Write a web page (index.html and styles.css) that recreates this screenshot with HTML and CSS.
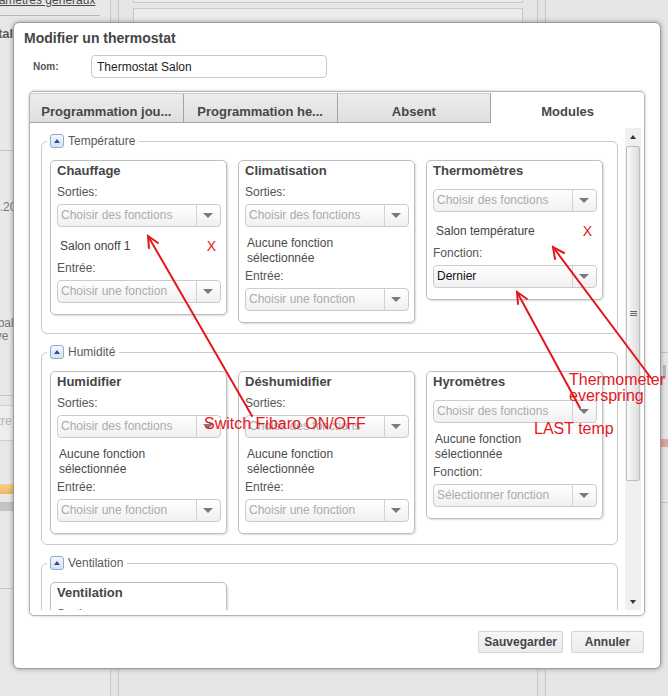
FILE: index.html
```html
<!DOCTYPE html>
<html lang="fr">
<head>
    <meta charset="UTF-8">
    <meta name="viewport" content="width=device-width, initial-scale=1.0">
    <title>Modifier un thermostat</title>
    <link rel="stylesheet" href="styles.css">
</head>
<body>
    <!-- page behind the modal -->
    <div class="page">
        <div class="side">
            <a class="side-link" href="#">Paramètres généraux</a>
            <div class="side-total">Total</div>
            <div class="side-info">
                <div class="side-date">1.2014</div>
                <div class="side-desc">Global<br>de ve</div>
            </div>
            <div class="side-field"><span>Filtre</span></div>
            <div class="side-bar"></div>
            <div class="side-rest"></div>
        </div>
        <div class="gutter"></div>
        <div class="main">
            <div class="main-box"></div>
            <div class="main-box second"></div>
        </div>
        <div class="gutter"></div>
        <div class="aside">
            <div class="aside-top"></div>
            <div class="aside-field"></div>
            <div class="aside-bar"></div>
            <div class="aside-rest"></div>
        </div>
    </div>

    <div class="dialog">
        <h1 class="dialog-title">Modifier un thermostat</h1>
        <div class="name-row">
            <label class="name-label" for="nom">Nom:</label>
            <input class="name-input" id="nom" type="text" value="Thermostat Salon">
        </div>

        <div class="tabs">
            <div class="tab-bar">
                <div class="tab">Programmation jou...</div>
                <div class="tab">Programmation he...</div>
                <div class="tab">Absent</div>
                <div class="tab active">Modules</div>
            </div>
            <div class="tab-body">
                <div class="scroll-view">
                    <fieldset class="group">
                        <legend><span class="toggle"></span>Température</legend>
                        <div class="cards">
                            <div class="card">
                                <div class="card-title">Chauffage</div>
                                <div class="field-label">Sorties:</div>
                                <div class="combo"><span class="combo-text">Choisir des fonctions</span><span class="combo-btn"></span></div>
                                <div class="item"><span>Salon onoff 1</span><span class="remove">X</span></div>
                                <div class="field-label">Entrée:</div>
                                <div class="combo"><span class="combo-text">Choisir une fonction</span><span class="combo-btn"></span></div>
                            </div>
                            <div class="card">
                                <div class="card-title">Climatisation</div>
                                <div class="field-label">Sorties:</div>
                                <div class="combo"><span class="combo-text">Choisir des fonctions</span><span class="combo-btn"></span></div>
                                <div class="empty">Aucune fonction<br>sélectionnée</div>
                                <div class="field-label">Entrée:</div>
                                <div class="combo"><span class="combo-text">Choisir une fonction</span><span class="combo-btn"></span></div>
                            </div>
                            <div class="card">
                                <div class="card-title">Thermomètres</div>
                                <div class="combo"><span class="combo-text">Choisir des fonctions</span><span class="combo-btn"></span></div>
                                <div class="item"><span>Salon température</span><span class="remove">X</span></div>
                                <div class="field-label">Fonction:</div>
                                <div class="combo"><span class="combo-text value">Dernier</span><span class="combo-btn"></span></div>
                            </div>
                        </div>
                    </fieldset>

                    <fieldset class="group">
                        <legend><span class="toggle"></span>Humidité</legend>
                        <div class="cards">
                            <div class="card">
                                <div class="card-title">Humidifier</div>
                                <div class="field-label">Sorties:</div>
                                <div class="combo"><span class="combo-text">Choisir des fonctions</span><span class="combo-btn"></span></div>
                                <div class="empty">Aucune fonction<br>sélectionnée</div>
                                <div class="field-label">Entrée:</div>
                                <div class="combo"><span class="combo-text">Choisir une fonction</span><span class="combo-btn"></span></div>
                            </div>
                            <div class="card">
                                <div class="card-title">Déshumidifier</div>
                                <div class="field-label">Sorties:</div>
                                <div class="combo"><span class="combo-text">Choisir des fonctions</span><span class="combo-btn"></span></div>
                                <div class="empty">Aucune fonction<br>sélectionnée</div>
                                <div class="field-label">Entrée:</div>
                                <div class="combo"><span class="combo-text">Choisir une fonction</span><span class="combo-btn"></span></div>
                            </div>
                            <div class="card">
                                <div class="card-title">Hyromètres</div>
                                <div class="combo"><span class="combo-text">Choisir des fonctions</span><span class="combo-btn"></span></div>
                                <div class="empty">Aucune fonction<br>sélectionnée</div>
                                <div class="field-label">Fonction:</div>
                                <div class="combo"><span class="combo-text">Sélectionner fonction</span><span class="combo-btn"></span></div>
                            </div>
                        </div>
                    </fieldset>

                    <fieldset class="group">
                        <legend><span class="toggle"></span>Ventilation</legend>
                        <div class="cards">
                            <div class="card">
                                <div class="card-title">Ventilation</div>
                                <div class="field-label">Sorties:</div>
                                <div class="combo"><span class="combo-text">Choisir des fonctions</span><span class="combo-btn"></span></div>
                            </div>
                        </div>
                    </fieldset>
                </div>
                <div class="scrollbar">
                    <div class="sb-up"></div>
                    <div class="sb-thumb"><span class="grip"></span></div>
                    <div class="sb-track"></div>
                    <div class="sb-down"></div>
                </div>
            </div>
        </div>

        <div class="dialog-buttons">
            <button class="btn" type="button">Sauvegarder</button>
            <button class="btn" type="button">Annuler</button>
        </div>
    </div>

    <!-- red hand-drawn notes on top of the screenshot -->
    <svg class="notes" width="668" height="696" viewBox="0 0 668 696">
        <g stroke="#e3171c" stroke-width="2" fill="none" stroke-linecap="round">
            <line x1="148" y1="236" x2="252" y2="416"/>
            <polyline points="149,248 148,236 158,243"/>
            <line x1="517" y1="292" x2="580" y2="408"/>
            <polyline points="518,304 517,292 527,299"/>
            <line x1="553" y1="247" x2="651" y2="378"/>
            <polyline points="555,259 553,247 564,253"/>
        </g>
        <g class="note-text">
            <text x="204" y="429">Switch Fibaro ON/OFF</text>
            <text x="569" y="385">Thermometer</text>
            <text x="569" y="401">everspring</text>
            <text x="534" y="434">LAST temp</text>
        </g>
    </svg>
</body>
</html>
```

FILE: styles.css
```css
body {
    margin: 0;
    background-color: #e2e2e2;
    font-family: "Liberation Sans", Arial, sans-serif;
    font-size: 12px;
    color: #555;
}

/* ---------- page behind the dialog ---------- */
.page {
    display: flex;
    height: 696px;
    overflow: hidden;
}
.side {
    width: 110px;
    flex: none;
    border-right: 1px solid #c6c6c6;
    background: #e8e8e8;
    overflow: hidden;
    white-space: nowrap;
}
.side-link {
    display: block;
    height: 21px;
    margin: -6px 10px 0 -20px;
    line-height: 12px;
    color: #4a4a4a;
    border-bottom: 1px solid #b8b8b8;
}
.side-total {
    height: 135px;
    padding-top: 10px;
    box-sizing: border-box;
    text-indent: -17px;
    font-size: 13px;
    font-weight: bold;
    color: #5a5a5a;
    border-bottom: 1px solid #c4c4c4;
}
.side-info {
    height: 195px;
    border-bottom: 1px solid #c4c4c4;
    color: #777;
}
.side-date {
    margin-top: 49px;
    text-indent: -7px;
}
.side-desc {
    margin: 103px 0 0 -21px;
    line-height: 13px;
}
.side-field {
    height: 34px;
    margin-top: 9px;
    border-top: 1px solid #cfcfcf;
    border-bottom: 1px solid #cfcfcf;
    background: #eeeeee;
    color: #b4b4b4;
    line-height: 30px;
}
.side-field span {
    margin-left: -15px;
}
.side-bar {
    height: 10px;
    margin-top: 43px;
    background: linear-gradient(#f7d08e, #eeb760);
    border-bottom: 8px solid #e8e8e8;
    box-shadow: 0 9px 0 #c4c4c4;
}
.side-rest {
    height: 86px;
    border-bottom: 1px solid #c4c4c4;
}
.gutter {
    width: 7px;
    flex: none;
    border-right: 1px solid #c6c6c6;
    background: #e4e4e4;
}
.main {
    width: 419px;
    flex: none;
    padding: 0 14px;
    box-sizing: border-box;
    border-right: 1px solid #c6c6c6;
    background: #e6e6e6;
}
.main-box {
    height: 2px;
    border: 1px solid #cacaca;
    border-top: none;
    background: #ececec;
}
.main-box.second {
    height: 30px;
    margin-top: 5px;
    border-top: 1px solid #cacaca;
}
.aside {
    flex: 1;
    background: #e6e6e6;
}
.aside-top {
    height: 352px;
    border-bottom: 1px solid #c4c4c4;
}
.aside-field {
    height: 14px;
    margin-top: 12px;
    border-left: 3px solid #b8b8b8;
    margin-left: 117px;
}
.aside-bar {
    height: 8px;
    margin-top: 60px;
    background: #e2a4a0;
}
.aside-rest {
    height: 55px;
    border-bottom: 1px solid #c4c4c4;
    box-shadow: 0 9px 0 -8px #c4c4c4;
}

/* ---------- dialog ---------- */
.dialog {
    position: absolute;
    left: 13px;
    top: 22px;
    width: 648px;
    box-sizing: border-box;
    padding: 0 15px 15px;
    background: #fff;
    border: 1px solid #9c9c9c;
    border-radius: 6px;
    box-shadow: 0 0 5px rgba(0, 0, 0, 0.35);
}
.dialog-title {
    margin: 0 0 0 -5px;
    padding-top: 5px;
    font-size: 14px;
    line-height: 20px;
    color: #454545;
}
.name-row {
    display: flex;
    align-items: center;
    margin-top: 7px;
    padding-left: 4px;
}
.name-label {
    width: 58px;
    font-size: 10px;
    font-weight: bold;
    color: #555;
}
.name-input {
    width: 236px;
    height: 23px;
    box-sizing: border-box;
    margin: 0;
    padding: 0 5px;
    border: 1px solid #c8c8c8;
    border-radius: 4px;
    font-family: inherit;
    font-size: 12px;
    color: #222;
    outline: none;
}

.tabs {
    margin-top: 13px;
    border: 1px solid #b3b3b3;
    border-radius: 5px;
    box-shadow: 0 0 3px rgba(0, 0, 0, 0.25);
    overflow: hidden;
}
.tab-bar {
    display: flex;
    padding-top: 1px;
}
.tab {
    flex: 1;
    height: 30px;
    box-sizing: border-box;
    padding-top: 9px;
    line-height: 18px;
    text-align: center;
    font-size: 13px;
    font-weight: bold;
    color: #474747;
    background: linear-gradient(#ececec, #dfdfdf);
    border-top: 1px solid #cfcfcf;
    border-right: 1px solid #a4a4a4;
    border-bottom: 1px solid #a4a4a4;
}
.tab:first-child {
    border-top-left-radius: 4px;
}
.tab.active {
    background: #fff;
    border-top-color: #fff;
    border-right: none;
    border-bottom-color: #fff;
}
.tab-body {
    display: flex;
    height: 492px;
    box-sizing: border-box;
    padding: 5px 3px 5px 0;
}
.scroll-view {
    flex: 1;
    overflow: hidden;
    padding: 6px 7px 0 11px;
}

.group {
    margin: 0 0 11px;
    padding: 12px 14px 10px 8px;
    border: 1px solid #cacaca;
    border-radius: 6px;
    min-width: 0;
}
.group legend {
    display: flex;
    align-items: center;
    margin-left: -3px;
    padding: 0 4px 0 3px;
    line-height: 14px;
    color: #5a5a5a;
}
.toggle {
    position: relative;
    width: 14px;
    height: 14px;
    box-sizing: border-box;
    margin-right: 4px;
    border: 1px solid #92aacb;
    border-radius: 3px;
    background: linear-gradient(#f2f7fd, #d5e3f3);
}
.toggle::after {
    content: "";
    position: absolute;
    left: 3px;
    top: 4px;
    border-left: 3px solid transparent;
    border-right: 3px solid transparent;
    border-bottom: 4px solid #2b4f8f;
}

.cards {
    display: flex;
    align-items: flex-start;
    gap: 11px;
}
.card {
    width: 177px;
    box-sizing: border-box;
    padding: 0 5px 11px 6px;
    border: 1px solid #bebebe;
    border-radius: 5px;
    box-shadow: 1px 1px 2px rgba(0, 0, 0, 0.15);
}
.card-title {
    margin-bottom: 3px;
    font-size: 13px;
    font-weight: bold;
    line-height: 20px;
    color: #464646;
}
.field-label {
    line-height: 16px;
    color: #555;
}
.combo {
    display: flex;
    height: 23px;
    box-sizing: border-box;
    margin-top: 4px;
    border: 1px solid #cbcbcb;
    border-radius: 4px;
    background: linear-gradient(#ffffff, #f0f0f0);
}
.card-title + .combo {
    margin-top: 8px;
}
.combo-text {
    flex: 1;
    padding-left: 3px;
    line-height: 21px;
    color: #ababab;
    white-space: nowrap;
    overflow: hidden;
}
.combo-text.value {
    color: #111;
}
.combo-btn {
    position: relative;
    width: 23px;
    border-left: 1px solid #d2d2d2;
}
.combo-btn::after {
    content: "";
    position: absolute;
    left: 6px;
    top: 8px;
    border-left: 5px solid transparent;
    border-right: 5px solid transparent;
    border-top: 5px solid #7a7a7a;
}
.item {
    display: flex;
    justify-content: space-between;
    align-items: center;
    height: 28px;
    margin-top: 5px;
    padding: 0 5px 0 3px;
    color: #444;
}
.remove {
    font-size: 14px;
    color: #e31414;
}
.empty {
    margin-top: 9px;
    padding: 0 2px 2px;
    line-height: 15px;
    color: #4a4a4a;
}

.scrollbar {
    display: flex;
    flex-direction: column;
    width: 16px;
    background: #efefef;
}
.sb-up, .sb-down {
    position: relative;
    height: 18px;
}
.sb-down {
    height: 16px;
}
.sb-up::after, .sb-down::after {
    content: "";
    position: absolute;
    left: 5px;
    border-left: 3px solid transparent;
    border-right: 3px solid transparent;
}
.sb-up::after {
    top: 7px;
    border-bottom: 4px solid #333;
}
.sb-down::after {
    top: 6px;
    border-top: 4px solid #333;
}
.sb-thumb {
    display: flex;
    justify-content: center;
    align-items: center;
    height: 333px;
    margin: 0 1px;
    border: 1px solid #bdbdbd;
    border-radius: 2px;
    background: linear-gradient(90deg, #fbfbfb, #dcdcdc);
}
.grip {
    width: 7px;
    height: 1px;
    margin-bottom: 4px;
    background: #666;
    box-shadow: 0 2px #666, 0 4px #666;
}
.sb-track {
    flex: 1;
}

.dialog-buttons {
    display: flex;
    justify-content: flex-end;
    gap: 8px;
    margin-top: 15px;
    padding-right: 1px;
}
.btn {
    min-width: 73px;
    height: 22px;
    padding: 0 5px;
    border: 1px solid #d4d4d4;
    border-radius: 2px;
    background: linear-gradient(#f6f6f6, #ececec);
    font-family: inherit;
    font-size: 12px;
    font-weight: bold;
    color: #454545;
    cursor: pointer;
}

/* ---------- notes ---------- */
.notes {
    position: absolute;
    left: 0;
    top: 0;
    pointer-events: none;
}
.note-text text {
    font-family: "Liberation Sans", Arial, sans-serif;
    font-size: 16px;
    fill: #e3171c;
}
```
